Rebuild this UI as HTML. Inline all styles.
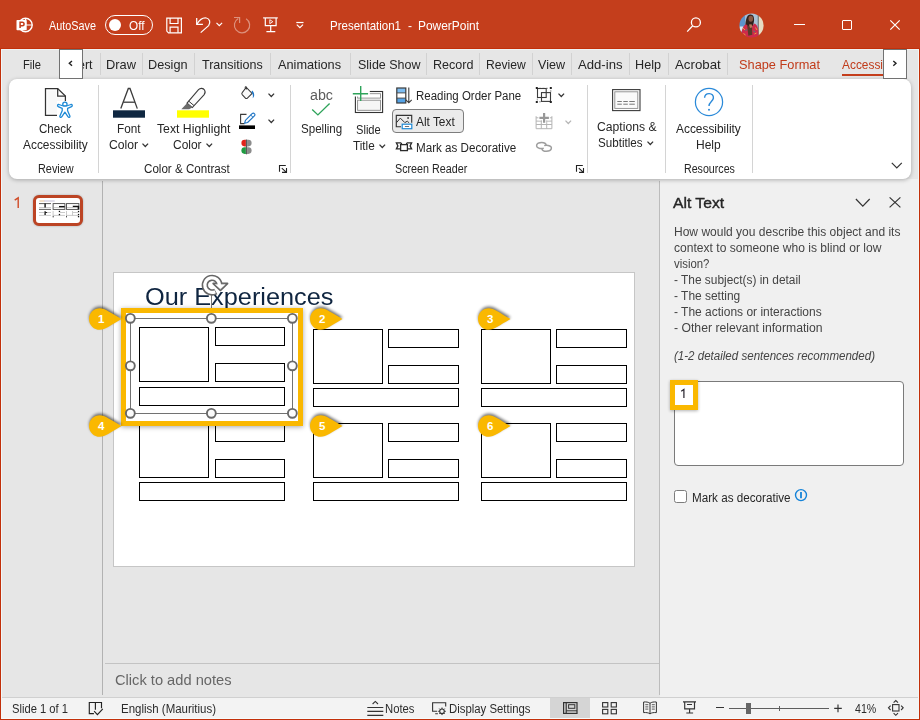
<!DOCTYPE html>
<html><head><meta charset="utf-8"><title>Presentation1 - PowerPoint</title>
<style>
html,body{margin:0;padding:0;}
body{width:920px;height:720px;overflow:hidden;background:#e6e6e6;font-family:"Liberation Sans",sans-serif;}
#app{position:relative;width:920px;height:720px;overflow:hidden;background:#e6e6e6;}
.t{position:absolute;transform-origin:0 0;white-space:nowrap;line-height:1;font-family:"Liberation Sans",sans-serif;}
.a{position:absolute;}
svg{position:absolute;overflow:visible;}

</style></head>
<body>
<div id="app">
<div class="a" style="left:0;top:0;width:920px;height:49px;background:#c43e1c;"></div>
<div class="a" style="left:0;top:49px;width:920px;height:30px;background:#e6e6e6;"></div>
<div class="a" style="left:660px;top:179px;width:260px;height:518px;background:#f0f0f0;"></div>
<div class="a" style="left:102px;top:181px;width:1px;height:514px;background:#b2b2b2;"></div>
<div class="a" style="left:659px;top:181px;width:1px;height:514px;background:#bcbcbc;"></div>
<div class="a" style="left:105px;top:663px;width:554px;height:1px;background:#c3c3c3;"></div>
<div class="a" style="left:0;top:697px;width:920px;height:23px;background:#f3f3f3;border-top:1px solid #d0d0d0;box-sizing:border-box;"></div>
<div class="a" style="left:550px;top:698px;width:40px;height:20px;background:#d5d5d5;"></div>
<div class="a" style="left:9px;top:79px;width:902px;height:100px;background:#fff;border-radius:8px;box-shadow:0 1px 4px rgba(0,0,0,.28);"></div>
<div class="a" style="left:0;top:49px;width:1px;height:671px;background:#c2300a;"></div>
<div class="a" style="left:919px;top:49px;width:1px;height:671px;background:#c2300a;"></div>
<div class="a" style="left:1px;top:718px;width:918px;height:1px;background:#f6fbfc;"></div>
<div class="a" style="left:0;top:719px;width:920px;height:1px;background:#c2300a;"></div>
<div class="a" style="left:1px;top:49px;width:1px;height:670px;background:#f2f7f8;"></div>
<div class="a" style="left:918px;top:49px;width:1px;height:670px;background:#f4f7f7;"></div>
<div class="a" style="left:0;top:48px;width:920px;height:1px;background:#c2300a;"></div>
<div class="a" style="left:1px;top:49px;width:918px;height:1px;background:#eef3f4;"></div>
<svg style="left:15.400px;top:14.800px" width="20" height="20" viewBox="0 0 20 20">
<circle cx="10.500" cy="10" r="6.700" fill="none" stroke="#fff" stroke-width="1.400"/>
<path d="M10.600 3.300V10H17.400" fill="none" stroke="#fff" stroke-width="1.200"/>
<rect x="1.500" y="5" width="10.200" height="10.300" rx=".8" fill="#fff"/>
<path d="M5.100 13V7.300h2.200a1.750 1.750 0 0 1 0 3.500H5.100" fill="none" stroke="#c43e1c" stroke-width="1.500"/>
</svg>
<span class="t" style="left:49.00px;top:19.00px;font-size:13px;color:#ffffff;transform:scaleX(0.8338);">AutoSave</span>
<div class="a" style="left:104.5px;top:15px;width:48px;height:19.5px;border:1.3px solid #fff;border-radius:11px;box-sizing:border-box;"></div>
<div class="a" style="left:108.5px;top:18.5px;width:12.5px;height:12.5px;border-radius:50%;background:#fff;"></div>
<span class="t" style="left:129.00px;top:19.00px;font-size:13px;color:#ffffff;transform:scaleX(0.9046);">Off</span>
<svg style="left:165px;top:16px" width="19" height="19" viewBox="165 16 19 19" fill="none" stroke="#fff" stroke-width="1.200">
<path d="M166.800 18.100h14.600v14.700h-12.900l-1.700-1.700z"/>
<path d="M170.100 18.100v5.400h7.900v-5.400"/><path d="M170.100 32.800v-5.600h7.900v5.600"/></svg>
<svg style="left:194px;top:15px" width="18" height="20" viewBox="194 15 18 20" fill="none" stroke="#fff" stroke-width="1.250">
<path d="M196.700 18v6.300h6.200"/><path d="M196.900 24.100C199.500 20 203 17.400 206.300 18c3.600.700 4.500 4.700 2.300 7.600L200.700 32.600"/></svg>
<svg style="left:216px;top:22px" width="8" height="6" viewBox="0 0 8 6" fill="none" stroke="#fff" stroke-width="1.200"><path d="M0.500 0.900L3.300 3.700L6.100 0.900"/></svg>
<svg style="left:232px;top:15px" width="20" height="20" viewBox="232 15 20 20" fill="none" stroke="#dd917d" stroke-width="1.200">
<path d="M234 17.500h5.600v5.400"/><path d="M246.100 18.700A7.650 7.650 0 1 1 238.300 18.500"/></svg>
<svg style="left:262px;top:16px" width="18" height="18" viewBox="262 16 18 18" fill="none" stroke="#fff" stroke-width="1.200">
<path d="M263.100 17.900h14.700"/><path d="M265.300 17.900v7.700h10.800v-7.700"/><path d="M270.700 25.600v6.100M266.400 31.700h8.900"/><path d="M269.800 19.700v4l3-2z" stroke-width=".9"/></svg>
<svg style="left:295px;top:21px" width="10" height="9" viewBox="295 21 10 9" fill="none" stroke="#fff" stroke-width="1.200"><path d="M296.300 22.500h7.200"/><path d="M296.800 24.600l3.100 3 3.100-3"/></svg>
<span class="t" style="left:329.50px;top:19.00px;font-size:13px;color:#ffffff;transform:scaleX(0.8850);">Presentation1</span>
<span class="t" style="left:408.00px;top:19.00px;font-size:13px;color:#ffffff;transform:scaleX(0.9240);">-</span>
<span class="t" style="left:418.00px;top:19.00px;font-size:13px;color:#ffffff;transform:scaleX(0.9175);">PowerPoint</span>
<svg style="left:685px;top:15px" width="20" height="20" viewBox="685 15 20 20" fill="none" stroke="#fff" stroke-width="1.300"><circle cx="695.900" cy="22.400" r="4.500"/><path d="M692.700 25.700L687.200 31.600"/></svg>
<svg style="left:738.500px;top:12.500px" width="25" height="25" viewBox="738.500 12.500 25 25">
<defs><clipPath id="av"><circle cx="751" cy="25" r="12.100"/></clipPath><filter id="avb" x="-10%" y="-10%" width="120%" height="120%"><feGaussianBlur stdDeviation=".550"/></filter></defs>
<g clip-path="url(#av)"><g filter="url(#avb)">
<rect x="736" y="10" width="30" height="30" fill="#9fbcd6"/>
<rect x="736" y="10" width="8.500" height="30" fill="#5c93cb"/>
<rect x="739" y="26" width="4" height="5" fill="#dbe7f0"/>
<rect x="751" y="12" width="6.500" height="12" fill="#aac3d6"/>
<rect x="757.300" y="10" width="1" height="30" fill="#4a4a48"/>
<rect x="758.200" y="10" width="8" height="30" fill="#e7dcc3"/>
<path d="M744.800 30C744.500 22 745.500 14.500 749.500 14c3.200-.4 4.300 2.500 4 6.500l-1 5.500-1.500 6z" fill="#33231f"/>
<ellipse cx="750.300" cy="18.300" rx="2.300" ry="3" fill="#8a5a45"/>
<path d="M741 38c-.5-7 .8-12.500 4.500-14.300l2.500 2.300 3.500-.2 2.500-2.800c3.500 1.300 4.500 7 3.800 15z" fill="#cf2c4b"/>
<path d="M742.500 27.500l2 2M755 27l1.500 2.500M743 33l2 1.500M754 33.500l2-1" stroke="#e8a23a" stroke-width="1"/>
<path d="M745 30l1.500-1M753 30.500l1.500 1" stroke="#2f8f86" stroke-width="1"/>
<path d="M746.700 25.500l4.800-.8.300 9.500-4 1z" fill="#5a3a2c"/>
<path d="M748.500 24l2.500-.3 1 3-2.500.8z" fill="#b87a5c"/>
</g></g></svg>
<div class="a" style="left:794px;top:23.700px;width:10.500px;height:1.200px;background:#fff;"></div>
<div class="a" style="left:842px;top:20px;width:10px;height:10px;border:1.200px solid #fff;box-sizing:border-box;border-radius:1px;"></div>
<svg style="left:890px;top:20px" width="10" height="10" viewBox="0 0 10 10" fill="none" stroke="#fff" stroke-width="1.200"><path d="M0.300 0.300l9.400 9.400M9.700 0.300L0.300 9.700"/></svg>
<span class="t" style="left:23.00px;top:58.00px;font-size:13px;color:#262626;transform:scaleX(0.8595);">File</span>
<div class="a" style="left:83px;top:49px;width:14px;height:30px;overflow:hidden;">
<span class="t" style="left:-4.90px;top:9.00px;font-size:13px;color:#262626;transform:scaleX(0.9558);">ert</span>
</div>
<span class="t" style="left:106.00px;top:58.00px;font-size:13px;color:#262626;transform:scaleX(0.9879);">Draw</span>
<span class="t" style="left:148.00px;top:58.00px;font-size:13px;color:#262626;transform:scaleX(0.9761);">Design</span>
<span class="t" style="left:201.75px;top:58.00px;font-size:13px;color:#262626;transform:scaleX(0.9627);">Transitions</span>
<span class="t" style="left:278.00px;top:58.00px;font-size:13px;color:#262626;transform:scaleX(0.9796);">Animations</span>
<span class="t" style="left:357.50px;top:58.00px;font-size:13px;color:#262626;transform:scaleX(0.9604);">Slide Show</span>
<span class="t" style="left:432.50px;top:58.00px;font-size:13px;color:#262626;transform:scaleX(0.9663);">Record</span>
<span class="t" style="left:486.00px;top:58.00px;font-size:13px;color:#262626;transform:scaleX(0.9317);">Review</span>
<span class="t" style="left:538.00px;top:58.00px;font-size:13px;color:#262626;transform:scaleX(0.9651);">View</span>
<span class="t" style="left:578.00px;top:58.00px;font-size:13px;color:#262626;transform:scaleX(1.0095);">Add-ins</span>
<span class="t" style="left:635.00px;top:58.00px;font-size:13px;color:#262626;transform:scaleX(0.9723);">Help</span>
<span class="t" style="left:675.00px;top:58.00px;font-size:13px;color:#262626;transform:scaleX(1.0213);">Acrobat</span>
<div class="a" style="left:100.0px;top:53px;width:1px;height:22px;background:#d2d2d2;"></div>
<div class="a" style="left:141.5px;top:53px;width:1px;height:22px;background:#d2d2d2;"></div>
<div class="a" style="left:194.0px;top:53px;width:1px;height:22px;background:#d2d2d2;"></div>
<div class="a" style="left:269.5px;top:53px;width:1px;height:22px;background:#d2d2d2;"></div>
<div class="a" style="left:350.0px;top:53px;width:1px;height:22px;background:#d2d2d2;"></div>
<div class="a" style="left:425.5px;top:53px;width:1px;height:22px;background:#d2d2d2;"></div>
<div class="a" style="left:479.0px;top:53px;width:1px;height:22px;background:#d2d2d2;"></div>
<div class="a" style="left:532.0px;top:53px;width:1px;height:22px;background:#d2d2d2;"></div>
<div class="a" style="left:571.2px;top:53px;width:1px;height:22px;background:#d2d2d2;"></div>
<div class="a" style="left:628.5px;top:53px;width:1px;height:22px;background:#d2d2d2;"></div>
<div class="a" style="left:667.5px;top:53px;width:1px;height:22px;background:#d2d2d2;"></div>
<div class="a" style="left:727.0px;top:53px;width:1px;height:22px;background:#d2d2d2;"></div>
<span class="t" style="left:739.00px;top:58.00px;font-size:13px;color:#c13b1a;transform:scaleX(0.9834);">Shape Format</span>
<div class="a" style="left:841px;top:49px;width:42px;height:30px;overflow:hidden;">
<span class="t" style="left:0.75px;top:9.00px;font-size:13px;color:#c13b1a;transform:scaleX(0.9146);">Accessibility</span>
<div class="a" style="left:0.750px;top:25px;width:60px;height:2px;background:#c43e1c;"></div>
</div>
<div class="a" style="left:59px;top:49px;width:24px;height:30px;background:#fff;border:1px solid #727272;box-sizing:border-box;"></div>
<svg style="left:67.500px;top:60px" width="6" height="7" viewBox="0 0 6 7" fill="none" stroke="#222" stroke-width="1.400"><path d="M4 0.900L1.300 3.300L4 5.700"/></svg>
<div class="a" style="left:883px;top:49px;width:24px;height:30px;background:#fff;border:1px solid #727272;box-sizing:border-box;"></div>
<svg style="left:892px;top:60px" width="6" height="7" viewBox="0 0 6 7" fill="none" stroke="#222" stroke-width="1.400"><path d="M1.300 0.900L4 3.300L1.300 5.700"/></svg>
<div class="a" style="left:98.0px;top:84.5px;width:1px;height:88px;background:#d4d4d4;"></div>
<div class="a" style="left:290.0px;top:84.5px;width:1px;height:88px;background:#d4d4d4;"></div>
<div class="a" style="left:587.0px;top:84.5px;width:1px;height:88px;background:#d4d4d4;"></div>
<div class="a" style="left:665.0px;top:84.5px;width:1px;height:88px;background:#d4d4d4;"></div>
<div class="a" style="left:751.5px;top:84.5px;width:1px;height:88px;background:#d4d4d4;"></div>
<svg style="left:44px;top:87px" width="30" height="32" viewBox="0 0 30 32">
<path d="M1.500 1.500h12.200l7.700 7.600v19.300H1.500z" fill="#fff" stroke="#333" stroke-width="1.250"/><path d="M3.400 3.400h9v7h7v16H3.400z" fill="#f8f8f8"/>
<path d="M13.700 1.500v7.600h7.700" fill="none" stroke="#333" stroke-width="1.250"/>
<rect x="13" y="14" width="17" height="18" fill="#fff"/>
<g fill="#fff" stroke="#1e8ad6" stroke-width="1.300" stroke-linejoin="round">
<circle cx="20.900" cy="17.300" r="2.150"/>
<path d="M14.900 17.500c-1.300-.3-2 1.500-.7 2.100l4 1.800v2.300l-2.300 5.300c-.5 1.200 1.200 2 1.800.8l3.200-4.600 3.200 4.600c.6 1.200 2.300.4 1.800-.8l-2.300-5.300v-2.300l4-1.800c1.300-.6.600-2.400-.7-2.100l-4.400 1.500h-3.200z"/>
</g></svg>
<span class="t" style="left:39.00px;top:123.00px;font-size:12px;color:#262626;transform:scaleX(0.9638);">Check</span>
<span class="t" style="left:23.00px;top:139.00px;font-size:12px;color:#262626;transform:scaleX(0.9916);">Accessibility</span>
<span class="t" style="left:38.30px;top:163.00px;font-size:12px;color:#262626;transform:scaleX(0.9065);">Review</span>
<svg style="left:113px;top:86px" width="32" height="32" viewBox="0 0 32 32">
<path d="M7.800 22.600L15.300 2.500h1.700L24.300 22.600" fill="none" stroke="#3b3b3b" stroke-width="1.300"/><path d="M10.300 16.200h11.600" stroke="#3b3b3b" stroke-width="1.300"/>
<rect x="0" y="24.300" width="32" height="7.400" fill="#0f2741"/></svg>
<span class="t" style="left:117.40px;top:123.00px;font-size:12px;color:#262626;transform:scaleX(0.9787);">Font</span>
<span class="t" style="left:109.20px;top:139.00px;font-size:12px;color:#262626;transform:scaleX(1.0146);">Color</span>
<svg style="left:141.5px;top:143px" width="6.6" height="4.4" viewBox="0 0 6.6 4.4" fill="none" stroke="#333" stroke-width="1.25"><path d="M0.5 0.6L3.3 3.5L6.1 0.6"/></svg>
<svg style="left:176px;top:86px" width="34" height="32" viewBox="0 0 34 32">
<rect x="1" y="24.300" width="32" height="7.400" fill="#ffff00"/>
<path d="M11 17.200L22.500 3.700c1.800-2 4.800-1.600 6 .3 1 1.600.8 3.300-.5 4.800L16.300 21.600z" fill="#fafafa" stroke="#3b3b3b" stroke-width="1.100"/>
<path d="M11 17.200l5.300 4.400-3.100 1.700H5.300z" fill="#6b6b6b"/>
<path d="M12.800 15.200l5.200 4.400" stroke="#3b3b3b" stroke-width="1"/></svg>
<span class="t" style="left:156.50px;top:123.00px;font-size:12px;color:#262626;transform:scaleX(1.0203);">Text Highlight</span>
<span class="t" style="left:173.40px;top:139.00px;font-size:12px;color:#262626;transform:scaleX(0.9972);">Color</span>
<svg style="left:205.5px;top:143px" width="6.6" height="4.4" viewBox="0 0 6.6 4.4" fill="none" stroke="#333" stroke-width="1.25"><path d="M0.5 0.6L3.3 3.5L6.1 0.6"/></svg>
<svg style="left:241px;top:86px" width="15" height="14" viewBox="0 0 15 14" fill="none">
<path d="M5.300 1.300l5.800 6.200-4.700 4.600c-.6.600-1.500.6-2 0L1.200 8.600c-.5-.6-.5-1.400 0-2z" stroke="#3b3b3b" stroke-width="1.050" fill="#fafafa"/>
<path d="M4.200 2.400V0.900c0-.5 1.100-.5 1.100 0v2.700" stroke="#3b3b3b" stroke-width=".9"/>
<path d="M11.300 4.500c1.400 1.700 2.200 3.400 1.800 5.400-.200 1-.8 1.700-1.400 2.300.5-2.200.3-4.300-1.300-6.200z" fill="#1e74c4"/></svg>
<svg style="left:267.5px;top:93px" width="6.6" height="4.4" viewBox="0 0 6.6 4.4" fill="none" stroke="#333" stroke-width="1.25"><path d="M0.5 0.6L3.3 3.5L6.1 0.6"/></svg>
<svg style="left:239px;top:112px" width="17" height="18" viewBox="0 0 17 18" fill="none">
<path d="M7.500 2.400H1.600v9.200h4" stroke="#3b3b3b" stroke-width="1.100"/>
<rect x="0" y="13.400" width="16" height="3.600" fill="#000"/>
<path d="M5.600 11.300l.8-3 6.700-6.700c.7-.7 1.700-.7 2.300 0 .6.600.6 1.600 0 2.200L8.600 10.500z" fill="#fff" stroke="#1e74c4" stroke-width="1.100" stroke-linejoin="round"/>
<path d="M11.700 3l2.300 2.300" stroke="#1e74c4" stroke-width="1"/></svg>
<svg style="left:267.5px;top:119px" width="6.6" height="4.4" viewBox="0 0 6.6 4.4" fill="none" stroke="#333" stroke-width="1.25"><path d="M0.5 0.6L3.3 3.5L6.1 0.6"/></svg>
<svg style="left:241px;top:139px" width="11" height="16" viewBox="0 0 11 16">
<path d="M4.900 0.800v6.600H3.700a3.300 3.300 0 0 1 0-6.600z" fill="#e2231a"/>
<path d="M4.900 8.300v6.600H3.700a3.300 3.300 0 0 1 0-6.600z" fill="#1f9b42"/>
<path d="M6.100 0.800h1.200a3.300 3.300 0 0 1 0 6.600H6.100z" fill="#8c8c8c"/>
<path d="M6.100 8.300h1.200a3.300 3.300 0 0 1 0 6.600H6.100z" fill="#8c8c8c"/>
<rect x="4.900" y="0.500" width="1.200" height="14.800" fill="#5a5a5a"/></svg>
<span class="t" style="left:143.80px;top:163.00px;font-size:12px;color:#262626;transform:scaleX(0.9673);">Color &amp; Contrast</span>
<svg style="left:279px;top:165px" width="9" height="9" viewBox="0 0 9 9" fill="none" stroke="#222" stroke-width="1.100"><path d="M0.500 6.700V0.500H6.800"/><path d="M2.800 3.100L7.400 7.300M7.500 3v4.400H3"/></svg>
<span class="t" style="left:309.80px;top:88.00px;font-size:14px;color:#5c5c5c;transform:scaleX(1.0191);">abc</span>
<svg style="left:311px;top:102px" width="21" height="15" viewBox="0 0 21 15" fill="none" stroke="#2ea35a" stroke-width="1.350"><path d="M1.200 7.500l5.700 5.400L18.600 1.400"/></svg>
<span class="t" style="left:301.20px;top:123.00px;font-size:12px;color:#262626;transform:scaleX(0.9650);">Spelling</span>
<svg style="left:351px;top:85px" width="33" height="29" viewBox="351 85 33 29" fill="none">
<rect x="355.400" y="91.500" width="27.200" height="21" stroke="#333" stroke-width="1.100" fill="#fff"/>
<rect x="357.600" y="93.700" width="22.900" height="4.400" stroke="#8a8a8a" stroke-width=".9" fill="#fff"/>
<rect x="357.600" y="100.200" width="22.900" height="10.100" stroke="#8a8a8a" stroke-width=".9" fill="#f6f6f6"/>
<rect x="351" y="85" width="18.800" height="11" fill="#fff" stroke="none"/>
<rect x="351" y="95" width="7" height="1.500" fill="#fff" stroke="none"/>
<path d="M360.700 86.100v15M352.800 93.700h15.300" stroke="#2ea35a" stroke-width="1.400"/></svg>
<span class="t" style="left:356.30px;top:124.00px;font-size:12px;color:#262626;transform:scaleX(0.9255);">Slide</span>
<span class="t" style="left:353.30px;top:140.00px;font-size:12px;color:#262626;transform:scaleX(0.9764);">Title</span>
<svg style="left:378.7px;top:144px" width="6.6" height="4.4" viewBox="0 0 6.6 4.4" fill="none" stroke="#333" stroke-width="1.25"><path d="M0.5 0.6L3.3 3.5L6.1 0.6"/></svg>
<svg style="left:396px;top:86.500px" width="17" height="17" viewBox="0 0 17 17" fill="none">
<rect x="0.800" y="1" width="9" height="15" fill="#fff"/>
<rect x="0.800" y="1" width="9" height="4.800" fill="#7dbdf2"/>
<rect x="0.800" y="11.200" width="9" height="4.800" fill="#55a3e6"/>
<path d="M0.800 5.900h9M0.800 11.100h9" stroke="#3b3b3b" stroke-width=".9"/>
<rect x="0.800" y="1" width="9" height="15" stroke="#3b3b3b" stroke-width="1.200"/>
<path d="M12.800 0.500v15.300M9.900 12.800l2.900 3 2.900-3" stroke="#3b3b3b" stroke-width="1.100"/></svg>
<span class="t" style="left:415.80px;top:90.00px;font-size:12px;color:#262626;transform:scaleX(0.9558);">Reading Order Pane</span>
<div class="a" style="left:392px;top:109px;width:72px;height:24px;background:#ebebeb;border:1px solid #7d7d7d;border-radius:4px;box-sizing:border-box;"></div>
<svg style="left:395px;top:114px" width="18" height="16" viewBox="395 114 18 16" fill="none">
<path d="M401 126.750H396.300V115.400H411.700V122.800" stroke="#333" stroke-width="1.150"/>
<path d="M396.600 122.600L400.300 118.100L404.800 122.600L407.300 121.200L409.200 122.900" stroke="#333" stroke-width="1"/>
<rect x="407.300" y="117.200" width="1.600" height="1.600" fill="#333"/>
<rect x="402.200" y="124.200" width="9.600" height="4.500" fill="#fff" stroke="#1e8ad6" stroke-width="1.200"/>
<path d="M404.900 126.500h4.200" stroke="#707070" stroke-width="1"/></svg>
<span class="t" style="left:416.20px;top:116.00px;font-size:12px;color:#262626;transform:scaleX(0.9890);">Alt Text</span>
<svg style="left:395px;top:141px" width="18" height="11" viewBox="395 141 18 11" fill="none" stroke="#2b2b2b" stroke-width="1.300">
<path d="M401 142.900H396.400L397.900 145.900L396.400 148.900H400.600"/>
<path d="M407 142.900H411.600L410.100 145.900L411.600 148.900H407.400"/>
<path d="M401.400 142.700v2M406.600 142.700v2"/>
<rect x="400.600" y="144.600" width="6.800" height="6" fill="#fff"/></svg>
<span class="t" style="left:415.80px;top:142.00px;font-size:12px;color:#262626;transform:scaleX(0.9694);">Mark as Decorative</span>
<span class="t" style="left:395.40px;top:163.00px;font-size:12px;color:#262626;transform:scaleX(0.8958);">Screen Reader</span>
<svg style="left:535px;top:86px" width="18" height="18" viewBox="0 0 18 18" fill="none" stroke="#3b3b3b">
<rect x="2.500" y="2.500" width="8.700" height="9" stroke-width="1.100"/>
<rect x="6.500" y="6.600" width="9" height="8.800" stroke-width="1.100"/>
<path d="M4 2.300h10.500M15.800 4v2M2.300 12.500v2M4 15.800h2" stroke-width=".9" stroke-dasharray="2 1.500" opacity=".55"/>
<g fill="#222" stroke="none"><rect x="0.800" y="1" width="2" height="2"/><rect x="14.800" y="1" width="2" height="2"/><rect x="0.800" y="15" width="2" height="2"/><rect x="14.800" y="15" width="2" height="2"/></g></svg>
<svg style="left:557.6px;top:93px" width="6.6" height="4.4" viewBox="0 0 6.6 4.4" fill="none" stroke="#333" stroke-width="1.25"><path d="M0.5 0.6L3.3 3.5L6.1 0.6"/></svg>
<svg style="left:535px;top:112px" width="18" height="18" viewBox="0 0 18 18" fill="none" stroke="#b4b4b4" stroke-width="1">
<path d="M1.100 4.200v12.500h15.800V4.200"/><path d="M1.100 9.100h15.800M1.100 12.500h15.800M6.300 6v10.700M11.700 6v10.700M1.100 5.800h4M13 5.800h4"/>
<rect x="3.400" y="0" width="11.400" height="8.300" fill="#fff" stroke="none"/><rect x="7" y="8" width="4.200" height="3.800" fill="#fff" stroke="none"/><path d="M9.100 1.100v9.700M4.400 5.800h9.500" stroke="#989898" stroke-width="2.200"/></svg>
<svg style="left:564.7px;top:119.6px" width="6.6" height="4.4" viewBox="0 0 6.6 4.4" fill="none" stroke="#b5b5b5" stroke-width="1.25"><path d="M0.5 0.6L3.3 3.5L6.1 0.6"/></svg>
<svg style="left:535px;top:141px" width="18" height="12" viewBox="0 0 18 12" fill="none" stroke="#9e9e9e" stroke-width="1.500">
<path d="M8.800 7.100c-1.300.5-2.500.5-4 .3C2.600 7 1.200 5.800 1.700 4c.5-1.700 2.600-2.500 5-2.500 2.500 0 4.600 1 4.400 3"/>
<path d="M9.200 4.600c1.200-.5 2.500-.5 4-.2 2.200.4 3.600 1.600 3.100 3.400-.5 1.700-2.600 2.500-5 2.500-2.500 0-4.600-1-4.400-3"/></svg>
<svg style="left:575.6px;top:165px" width="9" height="9" viewBox="0 0 9 9" fill="none" stroke="#222" stroke-width="1.100"><path d="M0.500 6.700V0.500H6.800"/><path d="M2.800 3.100L7.400 7.300M7.500 3v4.400H3"/></svg>
<svg style="left:612px;top:89px" width="29" height="23" viewBox="0 0 29 23" fill="none">
<rect x="0.600" y="0.600" width="27.400" height="21" stroke="#3b3b3b" stroke-width="1.100" fill="#fff"/>
<rect x="2.800" y="2.800" width="23" height="16.600" stroke="#8c8c8c" stroke-width=".9" fill="#fafafa"/>
<path d="M5.300 12.500h4.500M11.300 12.500h4.500M17.300 12.500h5.500M5.300 15.200h4.500M11.300 15.200h4.500M17.300 15.200h5.500" stroke="#6a6a6a" stroke-width=".9"/></svg>
<span class="t" style="left:596.50px;top:121.00px;font-size:12px;color:#262626;transform:scaleX(1.0136);">Captions &amp;</span>
<span class="t" style="left:598.00px;top:137.00px;font-size:12px;color:#262626;transform:scaleX(0.9691);">Subtitles</span>
<svg style="left:646.5px;top:140.5px" width="6.6" height="4.4" viewBox="0 0 6.6 4.4" fill="none" stroke="#333" stroke-width="1.25"><path d="M0.5 0.6L3.3 3.5L6.1 0.6"/></svg>
<svg style="left:694px;top:87px" width="30" height="30" viewBox="0 0 30 30" fill="none" stroke="#2b8ad9">
<circle cx="15" cy="15" r="13.600" stroke-width="1.250"/>
<path d="M10.600 10.800c.3-5.800 9.400-5.400 8.800.3-.4 3.300-4.400 3.700-4.400 8" stroke-width="1.400"/><circle cx="15" cy="22.700" r="1" fill="#2b8ad9" stroke="none"/></svg>
<span class="t" style="left:676.20px;top:123.00px;font-size:12px;color:#262626;transform:scaleX(0.9916);">Accessibility</span>
<span class="t" style="left:696.20px;top:139.00px;font-size:12px;color:#262626;transform:scaleX(1.0006);">Help</span>
<span class="t" style="left:683.50px;top:163.00px;font-size:12px;color:#262626;transform:scaleX(0.8874);">Resources</span>
<svg style="left:891px;top:162px" width="12" height="8" viewBox="0 0 12 8" fill="none" stroke="#333" stroke-width="1.200"><path d="M0.800 0.800l5 5 5-5"/></svg>
<svg style="left:12px;top:195px" width="10" height="15" viewBox="12 195 10 15" fill="none" stroke="#d04a26" stroke-width="1.400"><path d="M14.700 200.100L18.200 197.800V207.900"/></svg>
<div class="a" style="left:33px;top:195px;width:50px;height:31px;border:3px solid #bc4424;border-radius:6px;box-sizing:border-box;background:#fff;box-shadow:0 0 2px rgba(0,0,0,.3);"></div>
<svg style="left:36px;top:198px" width="44" height="25" viewBox="0 0 44 25" fill="none">
<path d="M3.400 3h5" stroke="#e3c08f" stroke-width="1"/><path d="M8 3h10.700" stroke="#c3bdd6" stroke-width="1"/>
<g stroke="#4a4a4a" stroke-width=".9">
<path d="M3 5.600h12M3 11.400h12"/>
<rect x="17.100" y="5.600" width="11.800" height="5.800"/>
<rect x="30.500" y="5.600" width="12.400" height="5.800"/>
</g>
<g stroke="#bdbdbd" stroke-width=".8">
<path d="M3 9.500h12M18 9.500h5M31 9.500h6"/>
<path d="M3 14.500h5M10 14.500h5M3 17.400h12M17.100 17.400h11.800M24 14.500h5M30.500 17.400h12M37 14.500h5"/>
<path d="M17.100 13v5.800M30.500 13v5.800M36.500 13v4.400"/>
</g>
<g stroke="#111">
<path d="M9.100 5.600v4" stroke-width="1.400"/>
<path d="M23 8.700h5.700" stroke-width="1.500"/>
<path d="M36.800 8.400h5.600v2.800" stroke-width="1.500"/>
<path d="M9.100 13.300v3.600" stroke-width="1.300"/>
<path d="M9.100 14.500h2" stroke-width=".9"/>
</g>
<g fill="#111"><rect x="22.800" y="12.800" width="1.300" height="1.300"/><rect x="22.800" y="15.900" width="1.300" height="1.300"/><rect x="41.900" y="12.900" width="1.300" height="1.300"/><rect x="41.900" y="15.900" width="1.300" height="1.300"/><rect x="41.900" y="18" width="1.300" height="1.300"/><rect x="30" y="18.300" width="1" height="1"/><rect x="16.700" y="18.300" width="1" height="1"/></g>
</svg>
<div class="a" style="left:113px;top:272px;width:522px;height:295px;background:#fff;border:1px solid #c6c6c6;box-sizing:border-box;"></div>
<span class="t" style="left:145.30px;top:286.00px;font-size:23px;color:#0f2540;transform:scaleX(1.1004);">Our Experiences</span>
<div class="a" style="left:139px;top:423px;width:70px;height:55px;border:1px solid #000;box-sizing:border-box;"></div>
<div class="a" style="left:215px;top:423px;width:70px;height:19px;border:1px solid #000;box-sizing:border-box;"></div>
<div class="a" style="left:215px;top:459px;width:70px;height:19px;border:1px solid #000;box-sizing:border-box;"></div>
<div class="a" style="left:139px;top:482px;width:146px;height:19px;border:1px solid #000;box-sizing:border-box;"></div>
<div class="a" style="left:313px;top:423px;width:70px;height:55px;border:1px solid #000;box-sizing:border-box;"></div>
<div class="a" style="left:388px;top:423px;width:71px;height:19px;border:1px solid #000;box-sizing:border-box;"></div>
<div class="a" style="left:388px;top:459px;width:71px;height:19px;border:1px solid #000;box-sizing:border-box;"></div>
<div class="a" style="left:313px;top:482px;width:146px;height:19px;border:1px solid #000;box-sizing:border-box;"></div>
<div class="a" style="left:481px;top:423px;width:70px;height:55px;border:1px solid #000;box-sizing:border-box;"></div>
<div class="a" style="left:556px;top:423px;width:71px;height:19px;border:1px solid #000;box-sizing:border-box;"></div>
<div class="a" style="left:556px;top:459px;width:71px;height:19px;border:1px solid #000;box-sizing:border-box;"></div>
<div class="a" style="left:481px;top:482px;width:146px;height:19px;border:1px solid #000;box-sizing:border-box;"></div>
<div class="a" style="left:313px;top:329px;width:70px;height:55px;border:1px solid #000;box-sizing:border-box;"></div>
<div class="a" style="left:388px;top:329px;width:71px;height:19px;border:1px solid #000;box-sizing:border-box;"></div>
<div class="a" style="left:388px;top:365px;width:71px;height:19px;border:1px solid #000;box-sizing:border-box;"></div>
<div class="a" style="left:313px;top:388px;width:146px;height:19px;border:1px solid #000;box-sizing:border-box;"></div>
<div class="a" style="left:481px;top:329px;width:70px;height:55px;border:1px solid #000;box-sizing:border-box;"></div>
<div class="a" style="left:556px;top:329px;width:71px;height:19px;border:1px solid #000;box-sizing:border-box;"></div>
<div class="a" style="left:556px;top:365px;width:71px;height:19px;border:1px solid #000;box-sizing:border-box;"></div>
<div class="a" style="left:481px;top:388px;width:146px;height:19px;border:1px solid #000;box-sizing:border-box;"></div>
<div class="a" style="left:211px;top:294px;width:1px;height:16px;background:#777;"></div>
<div class="a" style="left:121.250px;top:308.250px;width:182px;height:117.500px;border:5px solid #fab800;box-sizing:border-box;background:#fff;box-shadow:0 1px 5px rgba(0,0,0,.35);"></div>
<div class="a" style="left:139px;top:327px;width:70px;height:55px;border:1px solid #000;box-sizing:border-box;"></div>
<div class="a" style="left:215px;top:327px;width:70px;height:19px;border:1px solid #000;box-sizing:border-box;"></div>
<div class="a" style="left:215px;top:363px;width:70px;height:19px;border:1px solid #000;box-sizing:border-box;"></div>
<div class="a" style="left:139px;top:387px;width:146px;height:19px;border:1px solid #000;box-sizing:border-box;"></div>
<div class="a" style="left:130px;top:318px;width:163px;height:96px;border:1px solid #727272;box-sizing:border-box;"></div>
<svg style="left:123px;top:311px" width="15" height="15" viewBox="0 0 15 15"><circle cx="7.350" cy="7.35" r="4.450" fill="#fbfbfb" stroke="#686868" stroke-width="1.900"/></svg>
<svg style="left:123px;top:358px" width="15" height="15" viewBox="0 0 15 15"><circle cx="7.350" cy="7.85" r="4.450" fill="#fbfbfb" stroke="#686868" stroke-width="1.900"/></svg>
<svg style="left:123px;top:406px" width="15" height="15" viewBox="0 0 15 15"><circle cx="7.350" cy="7.35" r="4.450" fill="#fbfbfb" stroke="#686868" stroke-width="1.900"/></svg>
<svg style="left:204px;top:311px" width="15" height="15" viewBox="0 0 15 15"><circle cx="7.350" cy="7.35" r="4.450" fill="#fbfbfb" stroke="#686868" stroke-width="1.900"/></svg>
<svg style="left:204px;top:406px" width="15" height="15" viewBox="0 0 15 15"><circle cx="7.350" cy="7.35" r="4.450" fill="#fbfbfb" stroke="#686868" stroke-width="1.900"/></svg>
<svg style="left:285px;top:311px" width="15" height="15" viewBox="0 0 15 15"><circle cx="7.350" cy="7.35" r="4.450" fill="#fbfbfb" stroke="#686868" stroke-width="1.900"/></svg>
<svg style="left:285px;top:358px" width="15" height="15" viewBox="0 0 15 15"><circle cx="7.350" cy="7.85" r="4.450" fill="#fbfbfb" stroke="#686868" stroke-width="1.900"/></svg>
<svg style="left:285px;top:406px" width="15" height="15" viewBox="0 0 15 15"><circle cx="7.350" cy="7.35" r="4.450" fill="#fbfbfb" stroke="#686868" stroke-width="1.900"/></svg>
<svg style="left:198px;top:272px" width="34" height="26" viewBox="198 272 34 26" fill="none">
<g stroke="#666" stroke-linejoin="round">
<path d="M219.400 284.300A7.300 7.300 0 1 0 215.800 291.500" stroke-width="6.400"/>
<path d="M213.300 283.500H227.400L220.400 290.300z" fill="#6e6e6e" stroke-width="2"/>
</g>
<g stroke="#fff" stroke-linejoin="round">
<path d="M219.400 285A7.300 7.300 0 1 0 215.200 291.700" stroke-width="3.200"/>
<path d="M215.300 284.400H225.300L220.400 289.100z" fill="#fff" stroke-width=".4"/>
</g></svg>
<svg style="left:84.75px;top:303.25px" width="42" height="34" viewBox="-4 -16 42 34">
<defs><filter id="sh1" x="-30%" y="-30%" width="160%" height="170%"><feGaussianBlur stdDeviation="1.500"/></filter></defs>
<path d="M10.800 -10.800C16 -10.800 22 -6 32.500 0C22 6 16 10.800 10.800 10.800A10.800 10.800 0 0 1 10.800 -10.800z" fill="#000" opacity=".55" filter="url(#sh1)" transform="translate(0.300,-1.700)"/>
<path d="M10.800 -10.800C16 -10.800 22 -6 32.500 0C22 6 16 10.800 10.800 10.800A10.800 10.800 0 0 1 10.800 -10.800z" fill="#fab800"/>
<text x="12.300" y="4" font-family="Liberation Sans, sans-serif" font-size="11.500" font-weight="bold" fill="#fff" text-anchor="middle">1</text></svg>
<svg style="left:305.50px;top:302.75px" width="42" height="34" viewBox="-4 -16 42 34">
<defs><filter id="sh2" x="-30%" y="-30%" width="160%" height="170%"><feGaussianBlur stdDeviation="1.500"/></filter></defs>
<path d="M10.800 -10.800C16 -10.800 22 -6 32.500 0C22 6 16 10.800 10.800 10.800A10.800 10.800 0 0 1 10.800 -10.800z" fill="#000" opacity=".55" filter="url(#sh2)" transform="translate(0.300,-1.700)"/>
<path d="M10.800 -10.800C16 -10.800 22 -6 32.500 0C22 6 16 10.800 10.800 10.800A10.800 10.800 0 0 1 10.800 -10.800z" fill="#fab800"/>
<text x="12.300" y="4" font-family="Liberation Sans, sans-serif" font-size="11.500" font-weight="bold" fill="#fff" text-anchor="middle">2</text></svg>
<svg style="left:474.25px;top:302.75px" width="42" height="34" viewBox="-4 -16 42 34">
<defs><filter id="sh3" x="-30%" y="-30%" width="160%" height="170%"><feGaussianBlur stdDeviation="1.500"/></filter></defs>
<path d="M10.800 -10.800C16 -10.800 22 -6 32.500 0C22 6 16 10.800 10.800 10.800A10.800 10.800 0 0 1 10.800 -10.800z" fill="#000" opacity=".55" filter="url(#sh3)" transform="translate(0.300,-1.700)"/>
<path d="M10.800 -10.800C16 -10.800 22 -6 32.500 0C22 6 16 10.800 10.800 10.800A10.800 10.800 0 0 1 10.800 -10.800z" fill="#fab800"/>
<text x="12.300" y="4" font-family="Liberation Sans, sans-serif" font-size="11.500" font-weight="bold" fill="#fff" text-anchor="middle">3</text></svg>
<svg style="left:84.75px;top:410.25px" width="42" height="34" viewBox="-4 -16 42 34">
<defs><filter id="sh4" x="-30%" y="-30%" width="160%" height="170%"><feGaussianBlur stdDeviation="1.500"/></filter></defs>
<path d="M10.800 -10.800C16 -10.800 22 -6 32.500 0C22 6 16 10.800 10.800 10.800A10.800 10.800 0 0 1 10.800 -10.800z" fill="#000" opacity=".55" filter="url(#sh4)" transform="translate(0.300,-1.700)"/>
<path d="M10.800 -10.800C16 -10.800 22 -6 32.500 0C22 6 16 10.800 10.800 10.800A10.800 10.800 0 0 1 10.800 -10.800z" fill="#fab800"/>
<text x="12.300" y="4" font-family="Liberation Sans, sans-serif" font-size="11.500" font-weight="bold" fill="#fff" text-anchor="middle">4</text></svg>
<svg style="left:305.50px;top:409.75px" width="42" height="34" viewBox="-4 -16 42 34">
<defs><filter id="sh5" x="-30%" y="-30%" width="160%" height="170%"><feGaussianBlur stdDeviation="1.500"/></filter></defs>
<path d="M10.800 -10.800C16 -10.800 22 -6 32.500 0C22 6 16 10.800 10.800 10.800A10.800 10.800 0 0 1 10.800 -10.800z" fill="#000" opacity=".55" filter="url(#sh5)" transform="translate(0.300,-1.700)"/>
<path d="M10.800 -10.800C16 -10.800 22 -6 32.500 0C22 6 16 10.800 10.800 10.800A10.800 10.800 0 0 1 10.800 -10.800z" fill="#fab800"/>
<text x="12.300" y="4" font-family="Liberation Sans, sans-serif" font-size="11.500" font-weight="bold" fill="#fff" text-anchor="middle">5</text></svg>
<svg style="left:473.50px;top:409.75px" width="42" height="34" viewBox="-4 -16 42 34">
<defs><filter id="sh6" x="-30%" y="-30%" width="160%" height="170%"><feGaussianBlur stdDeviation="1.500"/></filter></defs>
<path d="M10.800 -10.800C16 -10.800 22 -6 32.500 0C22 6 16 10.800 10.800 10.800A10.800 10.800 0 0 1 10.800 -10.800z" fill="#000" opacity=".55" filter="url(#sh6)" transform="translate(0.300,-1.700)"/>
<path d="M10.800 -10.800C16 -10.800 22 -6 32.500 0C22 6 16 10.800 10.800 10.800A10.800 10.800 0 0 1 10.800 -10.800z" fill="#fab800"/>
<text x="12.300" y="4" font-family="Liberation Sans, sans-serif" font-size="11.500" font-weight="bold" fill="#fff" text-anchor="middle">6</text></svg>
<span class="t" style="left:114.50px;top:672.00px;font-size:15px;color:#666;transform:scaleX(0.9771);">Click to add notes</span>
<span class="t" style="left:673.00px;top:195.00px;font-size:15.5px;color:#262626;transform:scaleX(1.0110);-webkit-text-stroke:.4px #262626;">Alt Text</span>
<svg style="left:855px;top:197.500px" width="16" height="10" viewBox="0 0 16 10" fill="none" stroke="#333" stroke-width="1.200"><path d="M0.900 1l6.900 7.200L14.700 1"/></svg>
<svg style="left:889px;top:197px" width="12" height="11" viewBox="0 0 12 11" fill="none" stroke="#333" stroke-width="1.200"><path d="M0.600 0.400l10.800 10M11.400 0.400L0.600 10.400"/></svg>
<span class="t" style="left:674.30px;top:226.00px;font-size:12px;color:#444444;transform:scaleX(1.0013);">How would you describe this object and its</span>
<span class="t" style="left:674.30px;top:242.00px;font-size:12px;color:#444444;transform:scaleX(1.0061);">context to someone who is blind or low</span>
<span class="t" style="left:674.30px;top:258.00px;font-size:12px;color:#444444;transform:scaleX(0.9476);">vision?</span>
<span class="t" style="left:674.30px;top:274.00px;font-size:12px;color:#444444;transform:scaleX(0.9911);">- The subject(s) in detail</span>
<span class="t" style="left:674.30px;top:290.00px;font-size:12px;color:#444444;transform:scaleX(0.9958);">- The setting</span>
<span class="t" style="left:674.30px;top:306.00px;font-size:12px;color:#444444;transform:scaleX(0.9990);">- The actions or interactions</span>
<span class="t" style="left:674.30px;top:322.00px;font-size:12px;color:#444444;transform:scaleX(1.0174);">- Other relevant information</span>
<span class="t" style="left:674.30px;top:350.00px;font-size:12px;color:#444444;transform:scaleX(0.9627);font-style:italic;">(1-2 detailed sentences recommended)</span>
<div class="a" style="left:674px;top:381px;width:230px;height:85px;background:#fff;border:1px solid #7a7a7a;border-radius:4px;box-sizing:border-box;"></div>
<div class="a" style="left:670px;top:380px;width:28px;height:30px;background:#fff;border:5px solid #fab800;box-sizing:border-box;box-shadow:0 1px 3px rgba(0,0,0,.3);"></div>
<svg style="left:678px;top:386px" width="10" height="14" viewBox="678 386 10 14" fill="none" stroke="#2e2a33" stroke-width="1.250"><path d="M681.200 391.300L683.900 389.500V398.100"/></svg>
<div class="a" style="left:674px;top:490px;width:13px;height:13px;background:#fff;border:1px solid #7c7c7c;border-radius:2.500px;box-sizing:border-box;"></div>
<span class="t" style="left:692.40px;top:492.00px;font-size:12px;color:#262626;transform:scaleX(0.9726);">Mark as decorative</span>
<svg style="left:794px;top:488px" width="14" height="14" viewBox="794 488 14 14" fill="none" stroke="#1583d8"><circle cx="801" cy="495.100" r="5.500" stroke-width="1.400"/><path d="M801 492v6.200" stroke-width="1.800"/></svg>
<span class="t" style="left:12.00px;top:703.00px;font-size:12px;color:#2b2b2b;transform:scaleX(0.9328);">Slide 1 of 1</span>
<svg style="left:88px;top:701px" width="17" height="16" viewBox="88 701 17 16" fill="none" stroke="#222" stroke-width="1.150">
<path d="M93.900 713.600h-4.600v-11.100h6.100v7.200"/><path d="M95.400 702.500h6.100v5.700"/><path d="M94.100 711.200l3.300 3.400 5.400-5.700"/></svg>
<span class="t" style="left:121.25px;top:703.00px;font-size:12px;color:#2b2b2b;transform:scaleX(0.9561);">English (Mauritius)</span>
<svg style="left:367px;top:700px" width="17" height="17" viewBox="0 0 17 17" fill="none" stroke="#333" stroke-width="1.100"><path d="M5.600 4l2.700-2.600L11 4"/><path d="M0.300 7.500h16M0.300 11.400h16M0.300 15.400h16"/></svg>
<span class="t" style="left:384.80px;top:703.00px;font-size:12px;color:#2b2b2b;transform:scaleX(0.9396);">Notes</span>
<svg style="left:432px;top:701.500px" width="15" height="14" viewBox="0 0 15 14" fill="none" stroke="#333" stroke-width="1.100">
<path d="M13.700 4.500V0.700H0.600v8.500h4.600M3.200 11.800h2.700"/>
<circle cx="10" cy="9.300" r="2.300"/><path d="M10 5.500v1.500M10 11.600v1.500M6.200 9.300h1.500M12.300 9.300h1.500M7.300 6.600l1 1M11.700 11l1 1M12.700 6.600l-1 1M8.300 11l-1 1" stroke-width="1"/></svg>
<span class="t" style="left:449.00px;top:703.00px;font-size:12px;color:#2b2b2b;transform:scaleX(0.9472);">Display Settings</span>
<svg style="left:563px;top:702px" width="15" height="13" viewBox="0 0 15 13" fill="none" stroke="#333" stroke-width="1.200"><rect x="0.600" y="0.600" width="13.400" height="10.800"/><path d="M3.200 0.600v10.800"/><rect x="5.600" y="2.700" width="6.200" height="3.600" stroke-width="1"/><path d="M3.200 8.800h10.800" stroke-width="1"/></svg>
<svg style="left:602px;top:702px" width="16" height="13" viewBox="0 0 16 13" fill="none" stroke="#333" stroke-width="1.100"><rect x="0.600" y="0.600" width="5.200" height="4.400"/><rect x="9.200" y="0.600" width="5.200" height="4.400"/><rect x="0.600" y="7.400" width="5.200" height="4.400"/><rect x="9.200" y="7.400" width="5.200" height="4.400"/></svg>
<svg style="left:642.500px;top:700.500px" width="15" height="14" viewBox="0 0 15 14" fill="none" stroke="#333" stroke-width="1"><path d="M7 2.300C5.500 1 3 .8.600 1v10.600c2.400-.2 4.900 0 6.400 1.300 1.500-1.300 4-1.500 6.400-1.300V1C11 .8 8.500 1 7 2.300zM7 2.300v10.600"/><path d="M2.300 3.700h3M2.300 5.900h3M2.300 8.100h3M8.800 3.700h3M8.800 5.900h3M8.800 8.100h3" stroke-width=".8"/></svg>
<svg style="left:682px;top:700px" width="16" height="15" viewBox="0 0 16 15" fill="none" stroke="#333" stroke-width="1.150"><path d="M1 1.900h13M2.700 1.900v7h9.800v-7M7.600 8.900v4.100M4.300 13h6.800"/><path d="M5 4.500h5" stroke-width="1"/></svg>
<div class="a" style="left:715.750px;top:707px;width:8px;height:1.200px;background:#333;"></div>
<div class="a" style="left:729px;top:707.700px;width:100px;height:1px;background:#5e5e5e;"></div>
<div class="a" style="left:778.800px;top:705.500px;width:1px;height:5.500px;background:#5e5e5e;"></div>
<div class="a" style="left:746.250px;top:702.500px;width:4.500px;height:11.300px;background:#666;"></div>
<svg style="left:834px;top:703.500px" width="9" height="9" viewBox="0 0 9 9" fill="none" stroke="#333" stroke-width="1.150"><path d="M0.200 4.300h7.600M4 0.400v7.800"/></svg>
<span class="t" style="left:855.00px;top:703.00px;font-size:12px;color:#2b2b2b;transform:scaleX(0.8850);">41%</span>
<svg style="left:888px;top:700px" width="16" height="16" viewBox="0 0 16 16" fill="none" stroke="#333" stroke-width="1.100"><rect x="4.600" y="4.600" width="6.400" height="6.400"/><path d="M5.600 2.600L7.800 0.500 10 2.600M5.600 13.200l2.200 2.100 2.200-2.100M2.600 5.600L0.500 7.800l2.100 2.200M13.100 5.600l2.100 2.200-2.100 2.200"/></svg>
</div>
</body></html>
